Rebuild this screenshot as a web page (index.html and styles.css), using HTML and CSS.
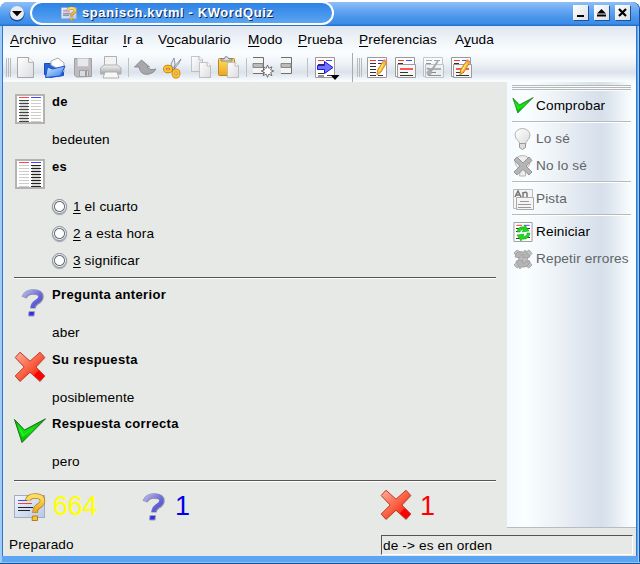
FILE: index.html
```html
<!DOCTYPE html>
<html lang="es">
<head>
<meta charset="utf-8">
<title>spanisch.kvtml - KWordQuiz</title>
<link rel="stylesheet" href="styles.css">
</head>
<body>
<svg class="defs" width="0" height="0" aria-hidden="true">
  <defs>
    <linearGradient id="gRed" x1="0" y1="0" x2="1" y2="1"><stop offset="0" stop-color="#ffb09a"/><stop offset=".5" stop-color="#fb6144"/><stop offset=".7" stop-color="#f83a20"/><stop offset=".72" stop-color="#f00"/></linearGradient>
    <linearGradient id="gBlue" x1="0" y1="0" x2="1" y2="1"><stop offset="0" stop-color="#b4b4ea"/><stop offset=".6" stop-color="#6868da"/><stop offset="1" stop-color="#4444d4"/></linearGradient>
    <linearGradient id="gGreen" x1="0" y1="0" x2="0" y2="1"><stop offset="0" stop-color="#12a012"/><stop offset=".5" stop-color="#10e010"/><stop offset="1" stop-color="#00b400"/></linearGradient>
    <linearGradient id="gGray" x1="0" y1="0" x2="0" y2="1"><stop offset="0" stop-color="#f4f4f4"/><stop offset="1" stop-color="#a4a4a4"/></linearGradient>
    <linearGradient id="gPage" x1="0" y1="0" x2="1" y2="1"><stop offset="0" stop-color="#fff"/><stop offset="1" stop-color="#dcdcdf"/></linearGradient>
    <linearGradient id="gFolder" x1="0" y1="0" x2="1" y2="1"><stop offset="0" stop-color="#d8f0ff"/><stop offset="1" stop-color="#2c78ee"/></linearGradient>
    <linearGradient id="gGold" x1="0" y1="0" x2="0" y2="1"><stop offset="0" stop-color="#ffdf60"/><stop offset="1" stop-color="#eda41c"/></linearGradient>
    <linearGradient id="gCard" x1="0" y1="0" x2="1" y2="1"><stop offset="0" stop-color="#f2f6ff"/><stop offset="1" stop-color="#b8c8e4"/></linearGradient>
    <symbol id="page" viewBox="0 0 17 22" preserveAspectRatio="none"><path d="M.5.5h11l5 5v16H.5z" fill="url(#gPage)" stroke="#a5a5aa"/><path d="M11.500.5v5h5" fill="#fff" stroke="#a5a5aa"/></symbol>
    <symbol id="cross" viewBox="0 0 32 32"><path d="M6 2.500 16 11.500 26 2.500l5 5L22.500 17l8.500 8.500L26.500 31.500 16 22 6 31.500 1.500 26 10 16.500 1.500 7.500z" fill="#aaa" opacity=".5"/><path d="M6 1.200 16 10.200 26 1.200l4.800 5.300L21.800 16l9 9L26 30.300 16 21.200 6 30.300 1.200 25 10.200 16 1.200 6.500z" fill="url(#gRed)" stroke="#c03a28" stroke-width="1"/></symbol>
    <symbol id="check" viewBox="0 0 32 26"><path d="M.5 1.500 10.500 12 31.500.8 8 24.500z" fill="url(#gGreen)" stroke="#167016"/><path d="M3 5.500 8.500 19 25 5 10 16z" fill="#22ec22"/></symbol>
    <symbol id="quest" viewBox="0 0 24 30"><path d="M3 9.500Q5.500 4 12 4Q20 4 20 9Q20 12 15.500 14.500Q12 17 12 20.500" fill="none" stroke="#8c8ca8" stroke-width="5.400"/><path d="M3 9Q5.500 3.500 12 3.500Q19.500 3.500 19.500 8.500Q19.500 11.500 15 14Q11.500 16.500 11.500 20" fill="none" stroke="url(#gBlue)" stroke-width="4"/><path d="M8 23.500h5.500l-.5 4.500H7.500z" fill="#3030d8" stroke="#9c9cce"/></symbol>
    <symbol id="goldcard" viewBox="0 0 32 30"><rect x=".5" y="3.500" width="30" height="22" fill="url(#gCard)" stroke="#a4acc0"/><path d="M4 8.500h10" stroke="#3e52dc"/><path d="M4 11.500h14" stroke="#f04040"/><path d="M4 15.500h15M4 18.500h12" stroke="#222"/><path d="M13.500 8.500Q15 4 21 4Q28.500 4 28.500 9Q28.500 12 24 14.500Q21 16.500 21 21" fill="none" stroke="#ad812c" stroke-width="5.500"/><path d="M13.500 8.500Q15 4 21 4Q28.500 4 28.500 9Q28.500 12 24 14.500Q21 16.500 21 20.500" fill="none" stroke="url(#gGold)" stroke-width="4"/><path d="M18.500 24h5v4.500h-5.500z" fill="#ffc428" stroke="#ad812c"/></symbol>
    <symbol id="list" viewBox="0 0 20 21"><path d="M.5.500h19v20H.5z" fill="#fff" stroke="#9a9a9a"/><path d="M3 3.500h6" stroke="#f33"/><path d="M11 3.500h6" stroke="#44f"/></symbol>
    <symbol id="form" viewBox="0 0 21 21"><path d="M.5.500h19v19H.5z" fill="#fff" stroke="#9a9a9a"/><path d="M3 3.500h6" stroke="#f33"/><path d="M11 3.500h6" stroke="#44f"/><path d="M3 6.500h5" stroke="#333"/><path d="M2.500 7.500h18v13h-18z" fill="#f6f6f6" stroke="#9a9a9a"/><path d="M5 12h13" stroke="#f22" stroke-width="1.500"/><path d="M5 15.500h8M5 18.500h13" stroke="#333"/></symbol>
    <symbol id="pencil" viewBox="0 0 12 17"><path d="m9 1 3 2-6 10-4 3 .500-5z" fill="#ffbd28" stroke="#b87820" stroke-width=".8"/><path d="m9 0 3 2-1 2-3-2z" fill="#ee8a70"/><path d="m8 5-4 7" stroke="#fff0a0"/></symbol>
  </defs>
</svg>
<div class="window">
  <header class="titlebar">
    <svg class="sysbtn" viewBox="0 0 16 16"><circle cx="8" cy="8.500" r="7.500" fill="#174f99"/><circle cx="8" cy="7.500" r="7" fill="#e9edf2"/><path d="M3 5.500h10L8 10.800z" fill="#000"/></svg>
    <div class="caption">
      <svg width="16" height="15"><use href="#goldcard"/></svg>
      <span>spanisch.kvtml - KWordQuiz</span>
    </div>
    <div class="winbtns">
      <svg viewBox="0 0 15 15"><path d="M4 11h7" stroke="#000" stroke-width="2"/></svg>
      <svg viewBox="0 0 15 15"><path d="M3 8.500 7.500 4 12 8.500zM3 9.500h9v2H3z"/></svg>
      <svg viewBox="0 0 15 15"><path d="m4 4 7 7M11 4l-7 7" stroke="#000" stroke-width="2.200"/></svg>
    </div>
  </header>
  <div class="client">
    <nav class="menubar">
      <span class="m1"><u>A</u>rchivo</span><span class="m2"><u>E</u>ditar</span><span class="m3"><u>I</u>r a</span><span class="m4">V<u>o</u>cabulario</span><span class="m5"><u>M</u>odo</span><span class="m6"><u>P</u>rueba</span><span class="m7"><u>P</u>referencias</span><span class="m8">A<u>y</u>uda</span>
    </nav>
    <svg class="toolbar" width="633" height="30" viewBox="3 52 633 30">
      <path d="M6.500 58v19M8.500 58v19M10.500 58v19M357.500 58v19M359.500 58v19M361.500 58v19" stroke="#b9b9b5"/>
      <path d="M128.500 58v19M246.500 58v19M307.500 58v19" stroke="#c0c0bc"/><path d="M352.500 53v29" stroke="#a9a9a9"/>
      <use href="#page" x="17" y="57" width="17" height="21"/>
      <g stroke-linejoin="round"><path d="M44.500 63.500h6l1 2h12v10l-14 2-5-3z" fill="#2963dc" stroke="#194aba"/><path d="M51 65v-4l7-3 6 5v9z" fill="#fff" stroke="#aaa"/><path d="m47.500 67 5 2 12.500-3-4.500 10-15 1.500z" fill="url(#gFolder)" stroke="#1854ce"/></g>
      <g stroke="#a0a0a4"><path d="M74.500 58.500h17v18l-15 .5-2-2z" fill="#bdbdc0"/><path d="M77.500 58.500h11v8h-11z" fill="#e8e8ea" stroke="#c9c9cc"/><path d="M79.500 70.500h9v6h-9z" fill="#dcdcde"/><path d="M85 71h2v5h-2z" fill="#999" stroke="none"/></g>
      <g stroke="#b0b0b4"><path d="M104.500 56.500h12v11h-12z" fill="#f3f3f3"/><path d="m104 65-3.500 3v6h20.500v-6l-3.500-3z" fill="url(#gGray)"/><path d="m105 72-2 6h16l-2-6z" fill="#f8f8f8"/></g>
      <path d="m141.500 60-7 7h4.500q2 9 10 7 5-1 7-5-6 2-9-2h2.500z" fill="#a8a8ac" stroke="#8b8b8f"/>
      <path d="m174 58 1 6-1 8-3-8zM181 59l-8 9-1 4 7-9z" fill="#e4ecf8" stroke="#758096" stroke-width=".8"/><g fill="none" stroke="#b87408" stroke-width="3.600"><ellipse cx="168" cy="69" rx="3.200" ry="2.400"/><ellipse cx="176" cy="73.500" rx="2.600" ry="3.200"/></g><g fill="none" stroke="#ffc02a" stroke-width="2.200"><ellipse cx="168" cy="69" rx="3.200" ry="2.400"/><ellipse cx="176" cy="73.500" rx="2.600" ry="3.200"/></g>
      <use href="#page" x="191" y="56" width="12" height="16"/><use href="#page" x="199" y="62" width="12" height="16"/>
      <rect x="218.500" y="58.500" width="16" height="17" rx="1" fill="url(#gGold)" stroke="#b88432"/><path d="M221 61v-2h3q2-5 5 0h3v2z" fill="#ddd" stroke="#858585"/><use href="#page" x="227" y="62" width="12" height="16"/>
      <g stroke="#6e6e6e"><path d="M253 57.500h10.500v16H253" fill="#f4f4f4"/><path d="M253 63.500h10v4h-10z" fill="#bbb" stroke="#888"/><path d="M281 57.500h10.500v16H281" fill="#f4f4f4"/><path d="M281 63.500h10v4h-10z" fill="#bbb" stroke="#888"/></g>
      <path d="m267.500 65 1.300 3.300 3.200-1.500-1.400 3.100 3.100 1.100-3.100 1.400 1.400 3.200-3.200-1.500-1.300 3.200-1.300-3.200-3.200 1.500 1.500-3.200-3.300-1.400 3.300-1.100-1.500-3.100 3.200 1.500z" fill="#fff" stroke="#555" stroke-width=".8"/>
      <use href="#list" x="315" y="57" width="20" height="21"/><path d="M318 64.500h6M318 73.500h6M318 76h6M327 75.500h5" stroke="#333"/><path d="M317.500 65.500h7v-4l8.500 6-8.500 6v-4h-7z" fill="#7272ff" stroke="#1717dc"/><path d="M330.500 75h9l-4.500 5z"/>
      <use href="#list" x="367" y="57" width="20" height="21"/><path d="M370 63.500h6M370 66.500h6M370 69.500h6M370 72.500h6M370 75.500h6M378 63.500h4M378 75.500h5" stroke="#333"/><use href="#pencil" x="375" y="59" width="12" height="17"/>
      <use href="#form" x="395" y="57" width="21" height="21"/>
      <g class="off"><use href="#form" x="423" y="57" width="21" height="21"/><path d="m427 68 4 3 7-10" fill="none" stroke="#666" stroke-width="2"/><circle cx="429" cy="73" r="2.500" fill="#777"/></g>
      <use href="#form" x="451" y="57" width="21" height="21"/><use href="#pencil" x="458" y="59" width="12" height="17"/>
    </svg>
    <div class="work">
      <main class="quiz">
        <section class="entry">
          <svg width="30" height="30" viewBox="0 0 30 30"><path d="M1 1h28v28H1z" fill="#fff" stroke="#b4b3b1" stroke-width="2"/><path d="M4 3.500h10" stroke="#f44"/><path d="M16 3.500h10" stroke="#44f"/><path d="M5 6h8v22H5z" fill="#d8d8d8"/><path d="M4 6.500h10M4 9.500h10M4 12.500h10M4 15.500h10M4 18.500h10M4 21.500h10M4 24.500h10M4 27.500h10" stroke="#444"/><path d="M16 6.500h10M16 9.500h10M16 12.500h10M16 15.500h10M16 18.500h10M16 21.500h10M16 24.500h10M16 27.500h10" stroke="#ccc"/></svg>
          <div><h2>de</h2><p>bedeuten</p></div>
        </section>
        <section class="entry choices">
          <svg width="30" height="30" viewBox="0 0 30 30"><path d="M1 1h28v28H1z" fill="#fff" stroke="#b4b3b1" stroke-width="2"/><path d="M4 3.500h10" stroke="#f44"/><path d="M16 3.500h10" stroke="#44f"/><path d="M17 6h8v22h-8z" fill="#d8d8d8"/><path d="M4 6.500h10M4 9.500h10M4 12.500h10M4 15.500h10M4 18.500h10M4 21.500h10M4 24.500h10M4 27.500h10" stroke="#ccc"/><path d="M16 6.500h10M16 9.500h10M16 12.500h10M16 15.500h10M16 18.500h10M16 21.500h10M16 24.500h10M16 27.500h10" stroke="#222"/></svg>
          <div><h2>es</h2>
            <label><i class="radio"></i><span><u>1</u> el cuarto</span></label>
            <label><i class="radio"></i><span><u>2</u> a esta hora</span></label>
            <label><i class="radio"></i><span><u>3</u> significar</span></label>
          </div>
        </section>
        <hr>
        <section class="entry first">
          <svg class="q" width="24" height="30"><use href="#quest"/></svg>
          <div><h2>Pregunta anterior</h2><p>aber</p></div>
        </section>
        <section class="entry short">
          <svg class="x" width="32" height="32"><use href="#cross"/></svg>
          <div><h2>Su respuesta</h2><p>posiblemente</p></div>
        </section>
        <section class="entry short">
          <svg class="c" width="32" height="26"><use href="#check"/></svg>
          <div><h2>Respuesta correcta</h2><p>pero</p></div>
        </section>
        <hr>
        <div class="scores">
          <div class="total"><svg width="32" height="30"><use href="#goldcard"/></svg><b>664</b></div>
          <div class="asked"><svg width="24" height="30"><use href="#quest"/></svg><b>1</b></div>
          <div class="wrong"><svg width="32" height="32"><use href="#cross"/></svg><b>1</b></div>
        </div>
      </main>
      <aside class="actions">
        <div class="grip"></div>
        <div class="act a1"><svg width="22" height="18" viewBox="0 0 22 18"><use href="#check" width="22" height="17"/></svg><span>Comprobar</span></div>
        <div class="rule"></div>
        <div class="act dim"><svg width="22" height="22"><path d="M8 17C8 12 3 12 3 7a7.500 6.500 0 0 1 15 0c0 5-4.500 5-4.500 10z" fill="url(#gPage)" stroke="#b4b4b4"/><path d="M7.500 15.500h6v4l-3 2-3-2z" fill="#ddd" stroke="#999"/></svg><span>Lo sé</span></div>
        <div class="act dim"><svg width="22" height="22"><path d="M8 17C8 12 3 12 3 7a7.500 6.500 0 0 1 15 0c0 5-4.500 5-4.500 10v4h-6z" fill="#eee" stroke="#b4b4b4"/><path d="m5 2 6 6 6-6 3 3.500-6 5.500 6 6-3 3-6-5.500L5 20l-3-3 6-6-6-6z" fill="#b5b5b5" stroke="#959595"/></svg><span>No lo sé</span></div>
        <div class="rule"></div>
        <div class="act dim"><svg width="22" height="22"><path d="M1.500 1.500h19v19h-19z" fill="#f5f5f5" stroke="#bbb"/><path d="m3 9 3-6 3 6M4 7h4M11 9V4M11 5q4-2 4 1v3" fill="none" stroke="#777" stroke-width="1.500"/><path d="M4.500 9.500h17v12h-17z" fill="#f5f5f5" stroke="#aaa"/><path d="M8 13.500h9M6 16.500h13M6 19.500h13" stroke="#999"/></svg><span>Pista</span></div>
        <div class="rule"></div>
        <div class="act"><svg width="22" height="22"><use href="#list" x="1" y="1" width="20" height="20"/><path d="M4 7.500h5M4 10.500h4M4 17.500h5M13 7.500h5M14 16.500h4" stroke="#333"/><path d="M5 11q1-6 7-5l1-2 4 6-7 1 2-2q-4-1-4 2zM18 12q-1 7-8 6l-1 2-4-6 7-1-1 2q4 1 4-3z" fill="#20d820" stroke="#119511" stroke-width=".5"/></svg><span>Reiniciar</span></div>
        <div class="act dim"><svg width="22" height="22"><path d="m5 2 6 4 6-4 3 3.500-5 5.500 5 6-3 3-6-4-6 4-3-3 5-6-5-6z" fill="#c0c0c0" stroke="#aaa"/><path d="M3 9q1-7 9-5l1-2 5 7-8 1 2-3q-4-1-4 3zM18 13q-1 7-9 6l-1 2-4-8 7-1-1 3q4 1 4-2z" fill="#b4b4b4" stroke="#999" stroke-width=".7"/></svg><span>Repetir errores</span></div>
      </aside>
    </div>
    <footer class="status"><span class="ready">Preparado</span><span class="order">de -&gt; es en orden</span></footer>
  </div>
</div>
</body>
</html>
```
FILE: styles.css
```css
* { box-sizing: border-box; }
body { margin: 0; width: 640px; height: 564px; overflow: hidden; background: #fff; font: 13.6px/16px "Liberation Sans", Arial, sans-serif; letter-spacing: .14px; color: #000; }
.defs { display: block; height: 0; }
svg { display: block; flex: none; }
h2, p { margin: 0; line-height: 16px; }
h2 { font-size: 13px; letter-spacing: .34px; }
p { font-size: inherit; }
u { text-underline-offset: 2px; text-decoration-thickness: 1px; text-decoration-skip-ink: none; }

.window { width: 640px; height: 562px; margin-top: 2px; padding: 0 1px 8px 2px; display: flex; flex-direction: column; border-radius: 8px 8px 0 0; background: #5ba5f2; box-shadow: inset 0 -1px #174f99, inset 0 -2px #8cc4fa, inset 2px 0 #a2ccf8, inset -1px 0 #174f99, inset -2px 0 #a2ccf8; }
.titlebar { height: 24px; display: flex; align-items: flex-start; margin: 0 0 0 -2px; border-radius: 8px 8px 0 0; background: linear-gradient(#90bef5 0, #71adf4 25%, #4895ea 65%, #3b8ce8 90%, #1e6bc4 100%); }
.sysbtn { width: 16px; height: 17px; margin: 3px 0 0 9px; }
.caption { width: 304px; height: 24px; margin: -1px 0 0 5px; padding-left: 29px; display: flex; align-items: center; gap: 5px; border: 2px solid #fff; border-radius: 12px; font-size: 13px; font-weight: bold; color: #fff; text-shadow: 1px 1px #0b2a58; letter-spacing: .6px; background: linear-gradient(#2d82e5, #5aa4f2); }
.winbtns { margin: 3px 9px 0 auto; display: flex; gap: 6px; }
.winbtns svg { width: 15px; height: 15px; background: linear-gradient(135deg, #fff, #dadfe5); box-shadow: 1px 1px #1e5394; }

.client { width: 634px; flex: 1; min-height: 0; display: flex; flex-direction: column; border-left: 1px solid #2b78cf; background: #e7e9e6; box-shadow: 1px 0 #2b78cf; }
.menubar { height: 26px; display: flex; padding: 6px 0 0 7px; background: linear-gradient(#dfe6ef, #edf2f8 45%, #fafeff); }
.menubar span { white-space: nowrap; }
.m1 { width: 62px; } .m2 { width: 51px; } .m3 { width: 35px; } .m4 { width: 90px; }
.m5 { width: 50px; } .m6 { width: 61px; } .m7 { width: 96px; }
.toolbar { background: linear-gradient(#fafeff, #f0f4f8 35%, #dbe2eb 68%, #f8fcfe 97%); }
.off { opacity: .5; filter: grayscale(1); }

.work { height: 446px; display: flex; }
.quiz { width: 504px; padding: 12px 11px 0; }
.entry { height: 65px; display: grid; grid-template-columns: 38px 1fr; padding-left: 1px; align-items: start; }
.entry > div { margin-left: -1px; }
.entry p { margin-top: 22px; }
.choices { height: 118px; }
.choices label { height: 27px; display: flex; align-items: center; gap: 6px; }
.choices h2 { margin-bottom: 18px; }
.radio { width: 15px; height: 15px; border-radius: 50%; border: 1px solid #858b94; background: radial-gradient(circle, #fff 0 4px, #66707c 5px, #f0f2f5 6px); box-shadow: 0 1px 1px #9a9fa5; }
hr { width: 482px; height: 2px; margin: 0; border: 0; border-top: 1px solid #555; background: #fff; }
.first { height: 73px; padding-top: 8px; }
.short { height: 64px; }
.q { margin: 1px 0 0 6px; }
.x { margin-left: -1px; margin-top: -1px; }
.c { margin: 2px 0 0 -1px; }
.scores { display: flex; height: 46px; padding-top: 7px; }
.scores div { display: flex; align-items: flex-start; }
.scores b { font: 27px/32px "Liberation Sans", Arial, sans-serif; letter-spacing: -.3px; }
.total { width: 128px; gap: 7px; color: #ff0; padding-top: 1px; }
.total svg { margin-top: 2px; }
.asked { width: 238px; gap: 9px; color: #00e; padding-top: 1px; }
.asked svg { margin-top: 2px; }
.wrong { gap: 8px; color: #f00; padding-top: 1px; }
.wrong svg { margin-top: -1px; }

.actions { width: 129px; height: 446px; padding: 3px 5px 0; border-bottom: 1px solid #b7bcc2; background: linear-gradient(90deg, #f5faff 0, #fafeff 14%, #edf2f6 38%, #dce4ee 62%, #d7dfeb 73%, #dee6ef 80%, #fafeff 97%); }
.grip { height: 6px; background: repeating-linear-gradient(#b5b8b8 0 1px, #fafcfc 1px 2px); margin-bottom: 3px; }
.act { height: 27px; display: flex; align-items: center; gap: 2px; white-space: nowrap; }
.dim { color: #606468; }
.a1 { height: 24px; }
.rule { height: 2px; margin: 2px 0; background: #b8bbba; border-bottom: 1px solid #fff; }
.a1 + .rule { margin-top: 3px; }
.status { height: 28px; display: flex; padding-left: 6px; }
.ready { width: 372px; padding-top: 9px; }
.order { width: 252px; height: 20px; margin-top: 7px; padding: 2px 0 0 1px; border: 1px solid #555; border-right-color: #fff; border-bottom-color: #fff; }
```
